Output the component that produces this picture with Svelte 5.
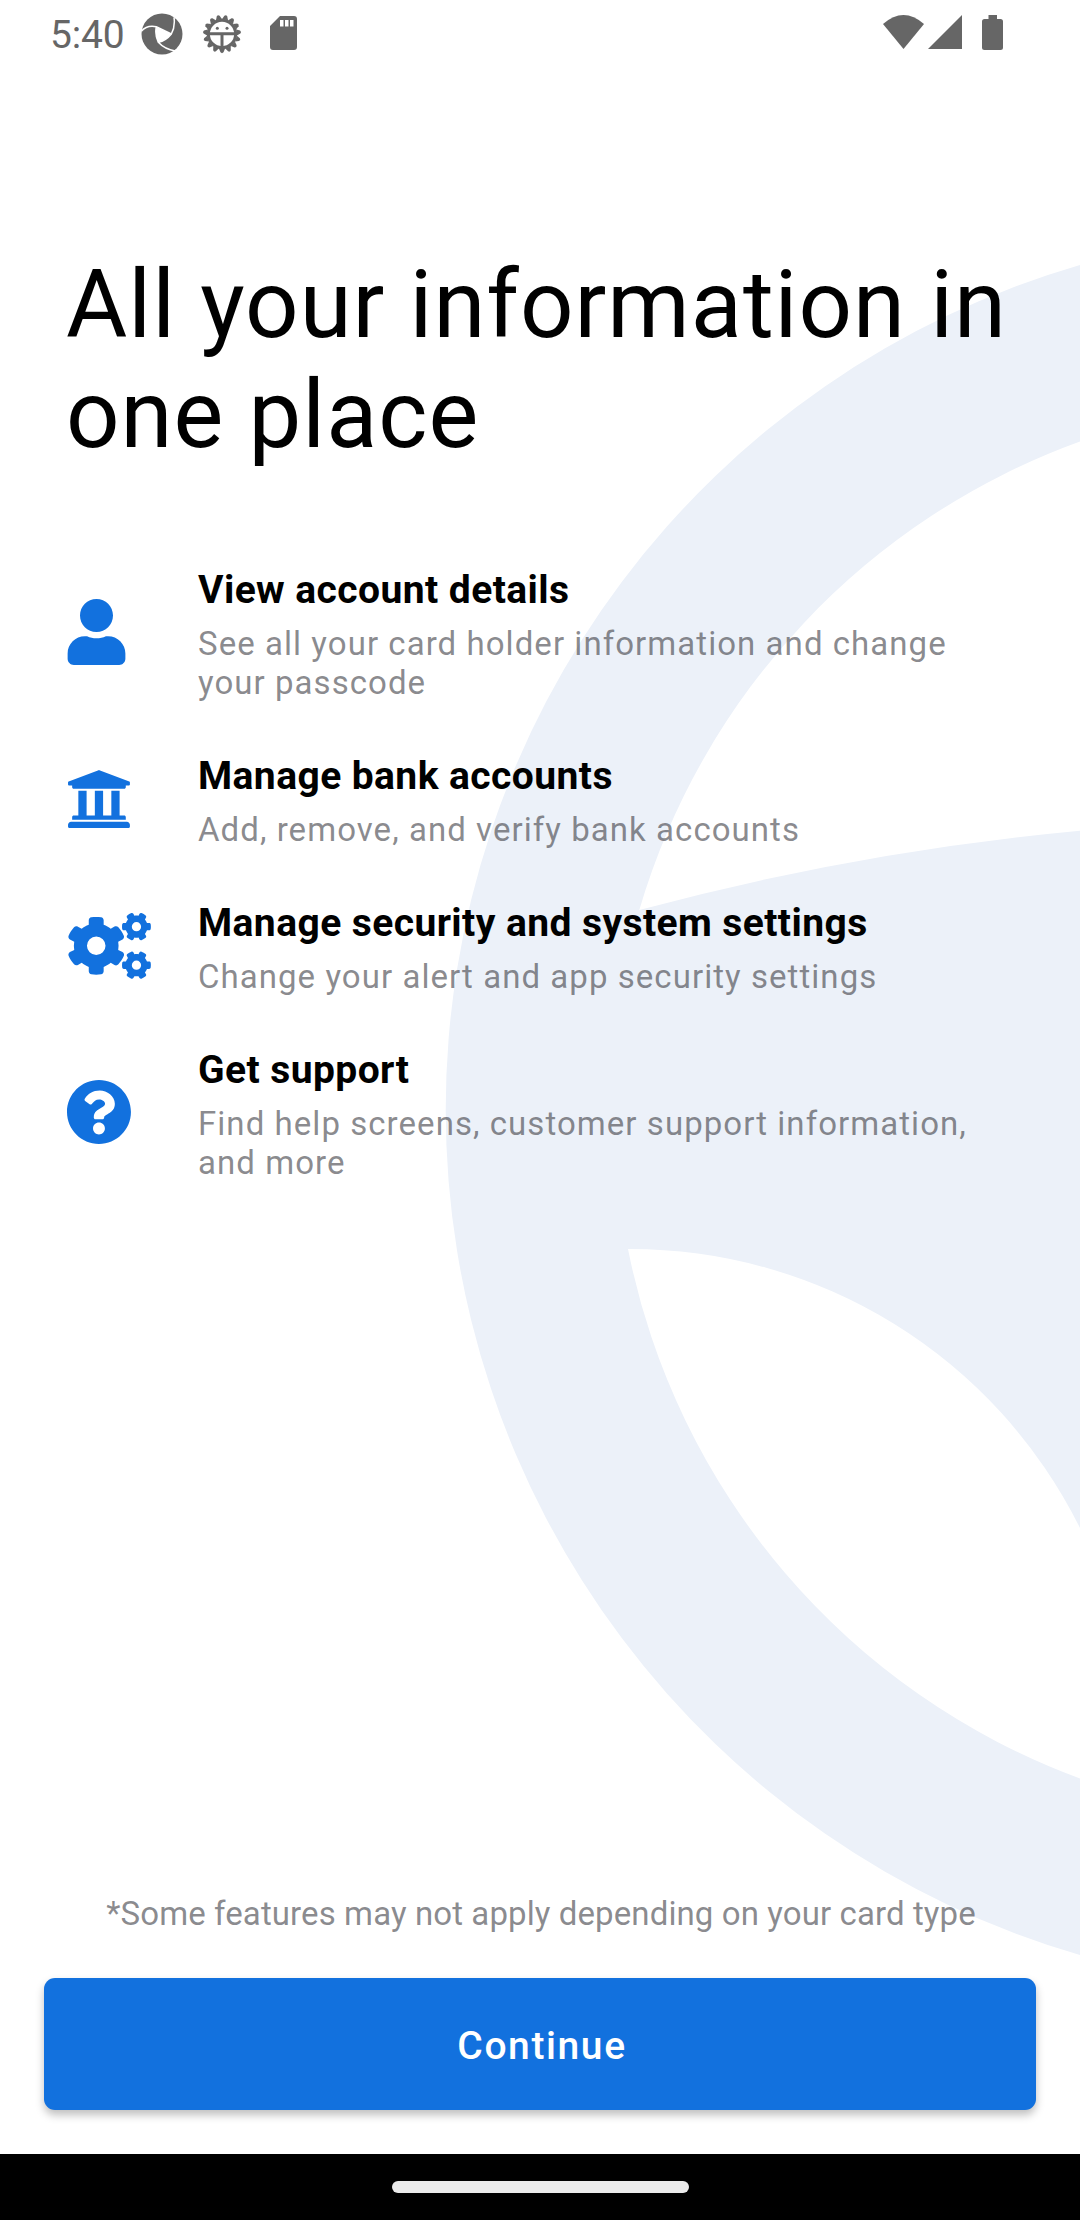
<script>
  const ringPath =
    'M1080 265A880 880 0 0 0 1080 1955V1778.500A712 712 0 0 1 628 1249A502 502 0 0 1 1080 1528V830.700A2636 2636 0 0 0 639.300 910A712 712 0 0 1 1080 441.500Z';

  const smallGear =
    'M512.1 191l-8.2 14.3c-3 5.3-9.4 7.5-15.1 5.4-11.8-4.4-22.6-10.7-32.1-18.6-4.6-3.8-5.8-10.5-2.8-15.7l8.2-14.3c-6.9-8-12.3-17.3-15.9-27.4h-16.5c-6 0-11.2-4.3-12.2-10.3-2-12-2.1-24.6 0-37.1 1-6 6.2-10.4 12.2-10.4h16.5c3.6-10.1 9-19.4 15.9-27.4l-8.2-14.3c-3-5.2-1.9-11.9 2.8-15.7 9.5-7.9 20.4-14.2 32.1-18.6 5.7-2.1 12.1.1 15.1 5.4l8.2 14.3c10.5-1.9 21.2-1.9 31.7 0L552 6.300c3-5.3 9.4-7.5 15.1-5.4 11.8 4.4 22.6 10.7 32.1 18.6 4.6 3.8 5.8 10.5 2.8 15.7l-8.2 14.3c6.9 8 12.3 17.3 15.9 27.4h16.5c6 0 11.2 4.3 12.2 10.3 2 12 2.1 24.6 0 37.1-1 6-6.2 10.4-12.2 10.4h-16.5c-3.6 10.1-9 19.4-15.9 27.4l8.2 14.3c3 5.2 1.9 11.9-2.8 15.7-9.5 7.9-20.4 14.2-32.1 18.6-5.7 2.1-12.1-.1-15.1-5.4l-8.2-14.300c-10.4 1.900-21.200 1.900-31.700 0zM564 106a36 36 0 1 0-72 0a36 36 0 1 0 72 0z';

  const teeth = Array.from({ length: 15 }, (_, i) => i * 24 + 12);

  const features = [
    { icon: 'user', title: 'View account details', text: 'See all your card holder information and change your passcode' },
    { icon: 'bank', title: 'Manage bank accounts', text: 'Add, remove, and verify bank accounts' },
    { icon: 'gears', title: 'Manage security and system settings', text: 'Change your alert and app security settings' },
    { icon: 'help', title: 'Get support', text: 'Find help screens, customer support information, and more' }
  ];
</script>

<div class="screen">
  <svg class="backdrop" viewBox="0 0 1080 2220" aria-hidden="true"><path d={ringPath} /></svg>

  <header class="status">
    <span class="clock">5:40</span>
    <svg class="swirl" viewBox="7 7 126 126">
      <circle cx="70" cy="70" r="61.500" />
      <path class="cut" d="M53 48L98 70Q82 90 59 95Q48 72 53 48Z" />
      <path class="line" d="M8 62Q24 42 53 48L98 70M106 20Q110 48 98 70Q82 90 59 95M110 121Q78 116 59 95Q48 72 53 48" />
    </svg>
    <svg class="android" viewBox="-63 -63 126 126">
      {#each teeth as angle}
        <path d="M-9 44L-4.500 55Q0 60 4.500 55L9 44Z" transform="rotate({angle - 12})" />
      {/each}
      <circle class="rim" r="41" />
      <path class="bars" d="M-40-1H40M0 0V40" />
      <circle cx="-14" cy="-17" r="4.500" /><circle cx="15" cy="-17" r="4.500" />
    </svg>
    <svg class="sd" viewBox="0 0 27 34">
      <path fill-rule="evenodd" d="M10 0H24Q27 0 27 3V31Q27 34 24 34H3Q0 34 0 31V10ZM10 4V10.500H13.500V4ZM15 4V10.500H18.500V4ZM20 4V10.500H23.500V4Z" />
    </svg>
    <span class="spacer"></span>
    <svg class="wifi" viewBox="0 0 41 34"><path d="M0 9Q20.500-9 41 9L20.500 34Z" /></svg>
    <svg class="signal" viewBox="0 0 34 34"><path d="M34 0V34H0Z" /></svg>
    <svg class="battery" viewBox="0 0 21 35"><path d="M6.500 0H15V4H18.500Q21 4 21 6.500V32.500Q21 35 18.500 35H2.500Q0 35 0 32.500V6.500Q0 4 2.500 4H6.500Z" /></svg>
  </header>

  <main>
    <h1>All your information in one place</h1>
    <ul>
      {#each features as feature}
        <li>
          <span class="icon">
            {#if feature.icon === 'user'}
              <svg viewBox="0 0 448 512" width="59" height="66"><path d="M224 256c70.700 0 128-57.300 128-128S294.700 0 224 0 96 57.300 96 128s57.300 128 128 128zm89.600 32h-16.700c-22.200 10.200-46.900 16-72.900 16s-50.600-5.800-72.900-16h-16.700C60.200 288 0 348.200 0 422.400V464c0 26.500 21.500 48 48 48h352c26.500 0 48-21.500 48-48v-41.600c0-74.200-60.200-134.400-134.400-134.400z" /></svg>
            {:else if feature.icon === 'bank'}
              <svg viewBox="8 0 512 512" width="66" height="66"><path d="M496 128v16a8 8 0 0 1-8 8h-24v12c0 6.627-5.373 12-12 12H60c-6.627 0-12-5.373-12-12v-12H24a8 8 0 0 1-8-8v-16a8 8 0 0 1 4.941-7.392l232-88a7.996 7.996 0 0 1 6.118 0l232 88A8 8 0 0 1 496 128zm-24 304H40c-13.255 0-24 10.745-24 24v16a8 8 0 0 0 8 8h464a8 8 0 0 0 8-8v-16c0-13.255-10.745-24-24-24zM96 192v192H60c-6.627 0-12 5.373-12 12v20h416v-20c0-6.627-5.373-12-12-12h-36V192h-64v192h-64V192h-64v192h-64V192H96z" /></svg>
            {:else if feature.icon === 'gears'}
              <svg class="gears" viewBox="-10 0 650 512" width="84" height="66">
                <path d="M386.300 286.100l33.700 16.800c10.100 5.800 14.500 18.100 10.500 29.100-8.900 24.200-26.400 46.400-42.600 65.800-7.400 8.900-20.200 11.100-30.300 5.300l-29.100-16.800c-16 13.700-34.600 24.600-54.900 31.700v33.600c0 11.600-8.300 21.600-19.700 23.600-24.600 4.200-50.400 4.400-75.900 0-11.500-2-20-11.900-20-23.600V418c-20.300-7.200-38.900-18-54.900-31.700L74 403c-10 5.800-22.900 3.600-30.300-5.300-16.200-19.400-33.300-41.600-42.200-65.700-4-10.900.4-23.200 10.500-29.100l33.300-16.800c-3.900-20.900-3.900-42.400 0-63.400L12 205.800c-10.100-5.800-14.600-18.100-10.500-29 8.900-24.200 26-46.400 42.200-65.800 7.400-8.900 20.200-11.100 30.300-5.300l29.100 16.800c16-13.700 34.600-24.600 54.900-31.700V57.100c0-11.500 8.200-21.500 19.600-23.500 24.600-4.200 50.500-4.400 76-.1 11.500 2 20 11.900 20 23.600v33.600c20.300 7.200 38.900 18 54.900 31.700l29.100-16.800c10-5.800 22.900-3.600 30.300 5.300 16.200 19.400 33.200 41.600 42.100 65.800 4 10.900.1 23.200-10 29.100l-33.700 16.800c3.900 21 3.900 42.500 0 63.500zM288 254a72 72 0 1 0-144 0a72 72 0 1 0 144 0z" />
                <path d={smallGear} />
                <path d={smallGear} transform="translate(0 299)" />
              </svg>
            {:else}
              <svg viewBox="8 0 512 512" width="66" height="66"><path d="M504 256c0 136.997-111.043 248-248 248S8 392.997 8 256C8 119.083 119.043 8 256 8s248 111.083 248 248zM262.655 90c-54.497 0-89.255 22.957-116.549 63.758-3.536 5.286-2.353 12.415 2.715 16.258l34.699 26.310c5.205 3.947 12.621 3.008 16.665-2.122 17.864-22.658 30.113-35.797 57.303-35.797 20.429 0 45.698 13.148 45.698 32.958 0 14.976-12.363 22.667-32.534 33.976C247.128 238.528 216 254.941 216 296v4c0 6.627 5.373 12 12 12h56c6.627 0 12-5.373 12-12v-1.333c0-28.462 83.186-29.647 83.186-106.667 0-58.002-60.165-102-116.531-102zM256 338c-25.365 0-46 20.635-46 46 0 25.364 20.635 46 46 46s46-20.636 46-46c0-25.364-20.635-46-46-46z" /></svg>
            {/if}
          </span>
          <div class="copy">
            <h2>{feature.title}</h2>
            <p>{feature.text}</p>
          </div>
        </li>
      {/each}
    </ul>
  </main>

  <footer>
    <p class="note">*Some features may not apply depending on your card type</p>
    <button>Continue</button>
  </footer>
  <div class="nav"><span></span></div>
</div>

<style>
  .screen {
    position: relative;
    isolation: isolate;
    display: flex;
    flex-direction: column;
    width: 1080px;
    height: 2220px;
    overflow: hidden;
    background: #fff;
    font-family: Roboto, sans-serif;
  }
  .backdrop {
    position: absolute;
    inset: 0;
    z-index: -1;
    fill: #ecf1f9;
  }
  h1, h2, p, ul { margin: 0; padding: 0; }

  .status {
    box-sizing: border-box;
    display: flex;
    align-items: center;
    height: 66px;
    padding: 0 77px 0 50px;
    color: #666;
    fill: #666;
  }
  .clock { width: 91px; font-size: 39px; line-height: 46px; padding-top: 4px; letter-spacing: -.2px; }
  .swirl, .android { width: 42px; height: 42px; margin-top: 1px; }
  .swirl .cut { fill: #fff; }
  .swirl .line { fill: none; stroke: #fff; stroke-width: 4.500; }
  .android { margin-left: 18px; transform: rotate(0deg); }
  .android .rim { fill: none; stroke: #666; stroke-width: 9; }
  .android .bars { stroke: #666; stroke-width: 9; }
  .sd { width: 27px; height: 34px; margin-left: 27px; }
  .spacer { flex: 1; }
  .wifi { width: 41px; height: 34px; margin: 0 4px 2px 0; }
  .signal { width: 34px; height: 34px; margin: 0 20px 2px 0; }
  .battery { width: 21px; height: 35px; margin-bottom: 1px; }

  main { flex: 1; padding: 184px 67px 0; }
  h1 { margin-left: -1px; font-size: 94px; line-height: 110px; font-weight: 400; letter-spacing: .98px; color: #000; }
  ul { display: grid; gap: 51px; margin-top: 97px; list-style: none; }
  li { display: flex; align-items: center; }
  .icon { display: flex; width: 131px; padding-bottom: 5px; }
  .icon svg { fill: #1271de; }
  .gears { fill-rule: evenodd; }
  .copy { width: 790px; }
  h2 { font-size: 39px; line-height: 46px; font-weight: 700; letter-spacing: .42px; color: #000; }
  .copy p { margin-top: 11px; font-size: 33px; line-height: 39px; letter-spacing: 1.050px; color: rgba(60, 60, 67, .6); }

  footer { display: flex; flex-direction: column; gap: 45px; padding: 0 44px 44px; }
  .note { padding-left: 2px; text-align: center; font-size: 33px; line-height: 39px; letter-spacing: .1px; color: rgba(60, 60, 67, .6); }
  button {
    height: 132px;
    padding: 4px 0 0 4px;
    border: 0;
    border-radius: 11px;
    background: #1271de;
    box-shadow: 0 5px 8px rgba(0, 0, 0, .25);
    color: #fff;
    font: 500 39px/46px Roboto, sans-serif;
    letter-spacing: 1.600px;
  }
  .nav { display: flex; align-items: center; justify-content: center; height: 66px; background: #000; }
  .nav span { width: 297px; height: 12px; border-radius: 6px; background: #ebebeb; }
</style>
